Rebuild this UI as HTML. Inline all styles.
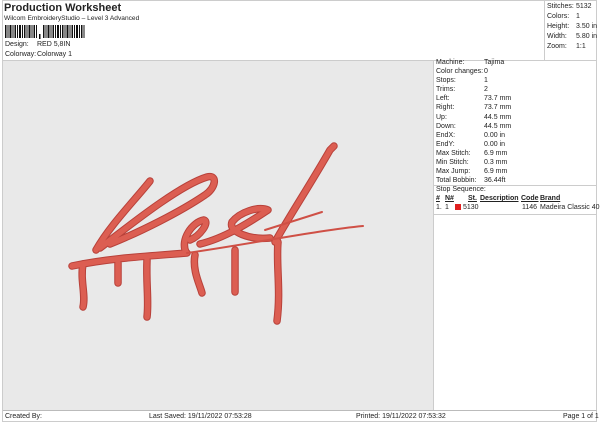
<!DOCTYPE html>
<html><head><style>
body{margin:0;width:600px;height:424px;background:#fff;font-family:"Liberation Sans",sans-serif;color:#222;position:relative;overflow:hidden}
.a{position:absolute;white-space:nowrap;font-size:7px;line-height:8px}
</style></head><body>
<div style="position:absolute;left:2px;top:0;width:595px;height:422px;border:1px solid #ccc;box-sizing:border-box"></div>
<div class="a" style="left:4px;top:2px;font-size:11px;line-height:13px;font-weight:bold">Production Worksheet</div>
<div class="a" style="left:4px;top:15px;font-size:6.6px">Wilcom EmbroideryStudio – Level 3 Advanced</div>
<svg style="position:absolute;left:5px;top:25px" width="82" height="14">
<g fill="#111">
<rect x="0" y="0" width="1.5" height="13"/><rect x="2.5" y="0" width="1" height="13"/><rect x="4.5" y="0" width="2" height="13"/><rect x="7.5" y="0" width="1" height="13"/><rect x="9.5" y="0" width="1.5" height="13"/><rect x="12" y="0" width="1" height="13"/><rect x="14" y="0" width="2" height="13"/><rect x="17" y="0" width="1" height="13"/><rect x="19" y="0" width="1.5" height="13"/><rect x="21.5" y="0" width="1" height="13"/><rect x="23.5" y="0" width="2" height="13"/><rect x="26.5" y="0" width="1" height="13"/><rect x="28.5" y="0" width="1.5" height="13"/><rect x="31" y="0" width="1" height="13"/>
<rect x="34" y="9" width="1.5" height="5"/>
<rect x="38" y="0" width="1.5" height="13"/><rect x="40.5" y="0" width="1" height="13"/><rect x="42.5" y="0" width="2" height="13"/><rect x="45.5" y="0" width="1" height="13"/><rect x="47.5" y="0" width="1.5" height="13"/><rect x="50" y="0" width="1" height="13"/><rect x="52" y="0" width="2" height="13"/><rect x="55" y="0" width="1" height="13"/><rect x="57" y="0" width="1.5" height="13"/><rect x="59.5" y="0" width="1" height="13"/><rect x="61.5" y="0" width="2" height="13"/><rect x="64.5" y="0" width="1" height="13"/><rect x="66.5" y="0" width="1.5" height="13"/><rect x="69" y="0" width="1" height="13"/><rect x="71" y="0" width="2" height="13"/><rect x="74" y="0" width="1" height="13"/><rect x="76" y="0" width="1.5" height="13"/><rect x="78.5" y="0" width="1" height="13"/>
</g></svg>
<div class="a" style="left:5px;top:41px">Design:</div><div class="a" style="left:37px;top:41px">RED 5,8IN</div>
<div class="a" style="left:5px;top:51px">Colorway:</div><div class="a" style="left:37px;top:51px">Colorway 1</div>
<div style="position:absolute;left:544px;top:0;width:1px;height:60px;background:#ccc"></div>
<div style="position:absolute;left:3px;top:60px;width:594px;height:1px;background:#ccc"></div>
<div class="a" style="left:547px;top:3px">Stitches:</div><div class="a" style="left:576px;top:3px">5132</div>
<div class="a" style="left:547px;top:13px">Colors:</div><div class="a" style="left:576px;top:13px">1</div>
<div class="a" style="left:547px;top:23px">Height:</div><div class="a" style="left:576px;top:23px">3.50 in</div>
<div class="a" style="left:547px;top:33px">Width:</div><div class="a" style="left:576px;top:33px">5.80 in</div>
<div class="a" style="left:547px;top:43px">Zoom:</div><div class="a" style="left:576px;top:43px">1:1</div>
<div style="position:absolute;left:3px;top:61px;width:430px;height:349px;background:#e9e9e9"></div>
<div style="position:absolute;left:433px;top:61px;width:1px;height:350px;background:#ccc"></div>
<div style="position:absolute;left:3px;top:410px;width:594px;height:1px;background:#bbb"></div>
<div style="position:absolute;left:434px;top:185px;width:163px;height:1px;background:#ccc"></div>
<div style="position:absolute;left:434px;top:214px;width:163px;height:1px;background:#ccc"></div>
<div class="a" style="left:436px;top:58px;line-height:9.1px">Machine:<br>Color changes:<br>Stops:<br>Trims:<br>Left:<br>Right:<br>Up:<br>Down:<br>EndX:<br>EndY:<br>Max Stitch:<br>Min Stitch:<br>Max Jump:<br>Total Bobbin:</div>
<div class="a" style="left:484px;top:58px;line-height:9.1px">Tajima<br>0<br>1<br>2<br>73.7 mm<br>73.7 mm<br>44.5 mm<br>44.5 mm<br>0.00 in<br>0.00 in<br>6.9 mm<br>0.3 mm<br>6.9 mm<br>36.44ft</div>
<div class="a" style="left:436px;top:186px">Stop Sequence:</div>
<div class="a" style="left:436px;top:195px;font-weight:bold;text-decoration:underline">#</div>
<div class="a" style="left:445px;top:195px;font-weight:bold;text-decoration:underline">N#</div>
<div class="a" style="left:468px;top:195px;font-weight:bold;text-decoration:underline">St.</div>
<div class="a" style="left:480px;top:195px;font-weight:bold;text-decoration:underline">Description</div>
<div class="a" style="left:521px;top:195px;font-weight:bold;text-decoration:underline">Code</div>
<div class="a" style="left:540px;top:195px;font-weight:bold;text-decoration:underline">Brand</div>
<div class="a" style="left:436px;top:204px">1.</div><div class="a" style="left:445px;top:204px">1</div>
<div style="position:absolute;left:455px;top:204px;width:6px;height:6px;background:#e02020"></div>
<div class="a" style="left:463px;top:204px">5130</div>
<div class="a" style="left:522px;top:204px">1146</div><div class="a" style="left:540px;top:204px">Madeira Classic 40</div>
<svg style="position:absolute;left:0;top:0" width="600" height="424">
<g fill="none" stroke-linecap="round" stroke-linejoin="round">
<g stroke="#b8413a" stroke-width="7.5">
<path d="M150,181 C135,200 110,225 96,250"/>
<path d="M100,248 C130,225 180,185 207,177 C218,174 216,188 205,195 C180,212 140,232 110,244"/>
<path d="M72,266 C110,258 150,256 187,253"/>
<path d="M186,252 C180,240 192,222 204,220 C210,222 200,236 190,240"/>
<path d="M200,244 C225,238 250,222 268,210 C258,206 240,212 232,222 C228,232 250,240 270,238"/>
<path d="M275,242 C290,215 310,185 330,150 L334,146"/>
<path d="M83,264 C80,280 86,295 83,307"/><path d="M118,263 L118,283"/><path d="M147,260 C146,285 149,300 147,317"/>
<path d="M195,255 C192,270 200,285 202,293"/><path d="M235,250 L235,292"/><path d="M278,242 C276,265 281,290 277,321"/>
</g>
<g stroke="#dc5e52" stroke-width="5.5">
<path d="M150,181 C135,200 110,225 96,250"/>
<path d="M100,248 C130,225 180,185 207,177 C218,174 216,188 205,195 C180,212 140,232 110,244"/>
<path d="M72,266 C110,258 150,256 187,253"/>
<path d="M186,252 C180,240 192,222 204,220 C210,222 200,236 190,240"/>
<path d="M200,244 C225,238 250,222 268,210 C258,206 240,212 232,222 C228,232 250,240 270,238"/>
<path d="M275,242 C290,215 310,185 330,150 L334,146"/>
<path d="M83,264 C80,280 86,295 83,307"/><path d="M118,263 L118,283"/><path d="M147,260 C146,285 149,300 147,317"/>
<path d="M195,255 C192,270 200,285 202,293"/><path d="M235,250 L235,292"/><path d="M278,242 C276,265 281,290 277,321"/>
</g>
<path d="M187,253 C250,244 320,230 363,226" stroke="#cf5046" stroke-width="2"/>
<path d="M265,230 L322,212" stroke="#cf5046" stroke-width="2"/>
</g></svg>
<div class="a" style="left:5px;top:413px">Created By:</div>
<div class="a" style="left:149px;top:413px">Last Saved: 19/11/2022 07:53:28</div>
<div class="a" style="left:356px;top:413px">Printed: 19/11/2022 07:53:32</div>
<div class="a" style="left:563px;top:413px">Page 1 of 1</div>
</body></html>
